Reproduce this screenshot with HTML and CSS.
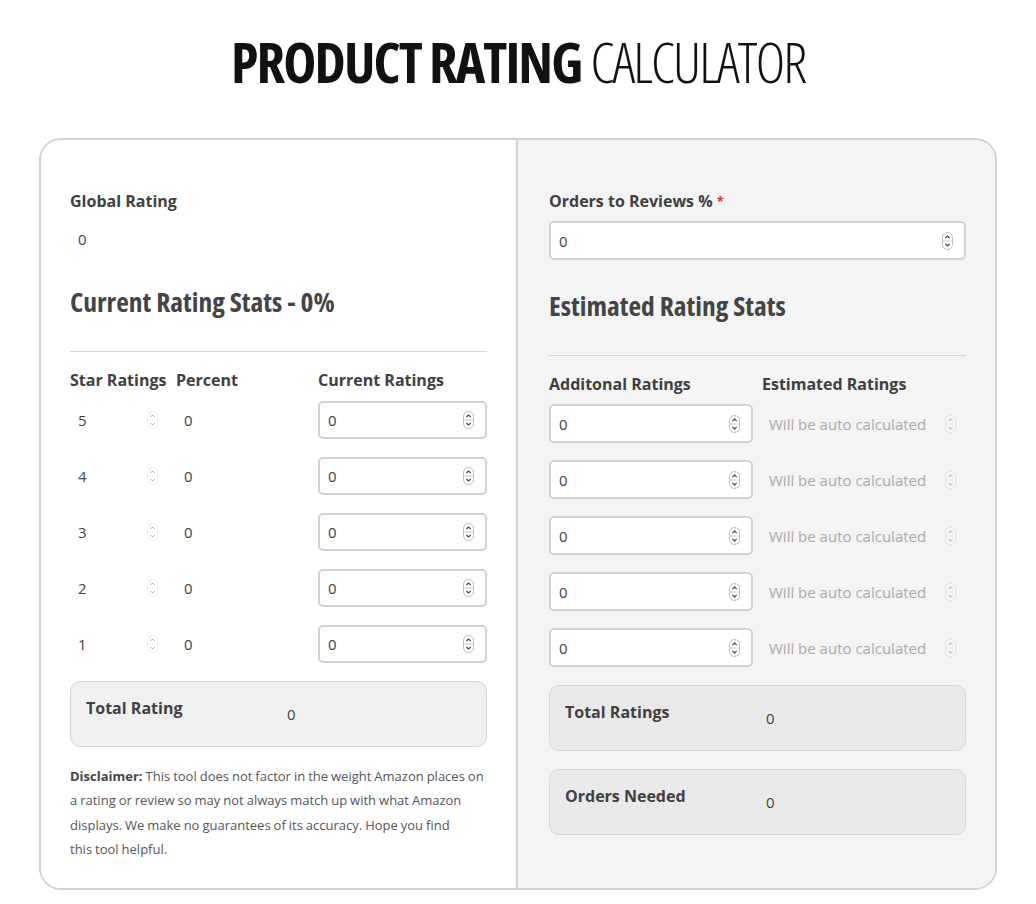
FILE: index.html
```html
<!DOCTYPE html>
<html lang="en">
<head>
<meta charset="utf-8">
<title>Product Rating Calculator</title>
<link rel="stylesheet" href="styles.css">
</head>
<body>
<h1 class="title"><span class="title-bold">PRODUCT RATING</span><span class="title-light">CALCULATOR</span></h1>

<div class="card">
  <section class="col col-left">
    <div class="label">Global Rating</div>
    <div class="global-value">0</div>
    <h2 class="stats-title">Current Rating Stats - 0%</h2>
    <hr class="rule">
    <div class="table-left">
      <div class="th">Star Ratings</div>
      <div class="th">Percent</div>
      <div class="th">Current Ratings</div>
    </div>
    <div class="rows-left">
      <div class="table-left row">
        <div class="plain star"><span class="pv">5</span><span class="spin faint"><svg viewBox="0 0 11 18" width="11" height="18"><rect x="0.5" y="0.5" width="10" height="17" rx="5" fill="#fff" stroke="#bbb"/><line x1="1" y1="9" x2="10" y2="9" stroke="#ccc"/><path d="M3.3 6.2 L5.5 4 L7.7 6.2" fill="none" stroke="#555" stroke-width="1.1"/><path d="M3.3 11.8 L5.5 14 L7.7 11.8" fill="none" stroke="#555" stroke-width="1.1"/></svg></span></div>
        <div class="plain pct"><span class="pv">0</span></div>
        <div class="field"><input class="field-input" type="text" value="0"><span class="spin"><svg viewBox="0 0 11 18" width="11" height="18"><rect x="0.5" y="0.5" width="10" height="17" rx="5" fill="#fff" stroke="#bbb"/><line x1="1" y1="9" x2="10" y2="9" stroke="#ccc"/><path d="M3.3 6.2 L5.5 4 L7.7 6.2" fill="none" stroke="#444" stroke-width="1.2"/><path d="M3.3 11.8 L5.5 14 L7.7 11.8" fill="none" stroke="#444" stroke-width="1.2"/></svg></span></div>
      </div>
      <div class="table-left row">
        <div class="plain star"><span class="pv">4</span><span class="spin faint"><svg viewBox="0 0 11 18" width="11" height="18"><rect x="0.5" y="0.5" width="10" height="17" rx="5" fill="#fff" stroke="#bbb"/><line x1="1" y1="9" x2="10" y2="9" stroke="#ccc"/><path d="M3.3 6.2 L5.5 4 L7.7 6.2" fill="none" stroke="#555" stroke-width="1.1"/><path d="M3.3 11.8 L5.5 14 L7.7 11.8" fill="none" stroke="#555" stroke-width="1.1"/></svg></span></div>
        <div class="plain pct"><span class="pv">0</span></div>
        <div class="field"><input class="field-input" type="text" value="0"><span class="spin"><svg viewBox="0 0 11 18" width="11" height="18"><rect x="0.5" y="0.5" width="10" height="17" rx="5" fill="#fff" stroke="#bbb"/><line x1="1" y1="9" x2="10" y2="9" stroke="#ccc"/><path d="M3.3 6.2 L5.5 4 L7.7 6.2" fill="none" stroke="#444" stroke-width="1.2"/><path d="M3.3 11.8 L5.5 14 L7.7 11.8" fill="none" stroke="#444" stroke-width="1.2"/></svg></span></div>
      </div>
      <div class="table-left row">
        <div class="plain star"><span class="pv">3</span><span class="spin faint"><svg viewBox="0 0 11 18" width="11" height="18"><rect x="0.5" y="0.5" width="10" height="17" rx="5" fill="#fff" stroke="#bbb"/><line x1="1" y1="9" x2="10" y2="9" stroke="#ccc"/><path d="M3.3 6.2 L5.5 4 L7.7 6.2" fill="none" stroke="#555" stroke-width="1.1"/><path d="M3.3 11.8 L5.5 14 L7.7 11.8" fill="none" stroke="#555" stroke-width="1.1"/></svg></span></div>
        <div class="plain pct"><span class="pv">0</span></div>
        <div class="field"><input class="field-input" type="text" value="0"><span class="spin"><svg viewBox="0 0 11 18" width="11" height="18"><rect x="0.5" y="0.5" width="10" height="17" rx="5" fill="#fff" stroke="#bbb"/><line x1="1" y1="9" x2="10" y2="9" stroke="#ccc"/><path d="M3.3 6.2 L5.5 4 L7.7 6.2" fill="none" stroke="#444" stroke-width="1.2"/><path d="M3.3 11.8 L5.5 14 L7.7 11.8" fill="none" stroke="#444" stroke-width="1.2"/></svg></span></div>
      </div>
      <div class="table-left row">
        <div class="plain star"><span class="pv">2</span><span class="spin faint"><svg viewBox="0 0 11 18" width="11" height="18"><rect x="0.5" y="0.5" width="10" height="17" rx="5" fill="#fff" stroke="#bbb"/><line x1="1" y1="9" x2="10" y2="9" stroke="#ccc"/><path d="M3.3 6.2 L5.5 4 L7.7 6.2" fill="none" stroke="#555" stroke-width="1.1"/><path d="M3.3 11.8 L5.5 14 L7.7 11.8" fill="none" stroke="#555" stroke-width="1.1"/></svg></span></div>
        <div class="plain pct"><span class="pv">0</span></div>
        <div class="field"><input class="field-input" type="text" value="0"><span class="spin"><svg viewBox="0 0 11 18" width="11" height="18"><rect x="0.5" y="0.5" width="10" height="17" rx="5" fill="#fff" stroke="#bbb"/><line x1="1" y1="9" x2="10" y2="9" stroke="#ccc"/><path d="M3.3 6.2 L5.5 4 L7.7 6.2" fill="none" stroke="#444" stroke-width="1.2"/><path d="M3.3 11.8 L5.5 14 L7.7 11.8" fill="none" stroke="#444" stroke-width="1.2"/></svg></span></div>
      </div>
      <div class="table-left row">
        <div class="plain star"><span class="pv">1</span><span class="spin faint"><svg viewBox="0 0 11 18" width="11" height="18"><rect x="0.5" y="0.5" width="10" height="17" rx="5" fill="#fff" stroke="#bbb"/><line x1="1" y1="9" x2="10" y2="9" stroke="#ccc"/><path d="M3.3 6.2 L5.5 4 L7.7 6.2" fill="none" stroke="#555" stroke-width="1.1"/><path d="M3.3 11.8 L5.5 14 L7.7 11.8" fill="none" stroke="#555" stroke-width="1.1"/></svg></span></div>
        <div class="plain pct"><span class="pv">0</span></div>
        <div class="field"><input class="field-input" type="text" value="0"><span class="spin"><svg viewBox="0 0 11 18" width="11" height="18"><rect x="0.5" y="0.5" width="10" height="17" rx="5" fill="#fff" stroke="#bbb"/><line x1="1" y1="9" x2="10" y2="9" stroke="#ccc"/><path d="M3.3 6.2 L5.5 4 L7.7 6.2" fill="none" stroke="#444" stroke-width="1.2"/><path d="M3.3 11.8 L5.5 14 L7.7 11.8" fill="none" stroke="#444" stroke-width="1.2"/></svg></span></div>
      </div>
    </div>
    <div class="total-box total-left">
      <div class="total-label">Total Rating</div>
      <div class="total-value">0</div>
    </div>
    <p class="disclaimer"><strong>Disclaimer:</strong> This tool does not factor in the weight Amazon places on a rating or review so may not always match up with what Amazon displays. We make no guarantees of its accuracy. Hope you find this&nbsp;tool helpful.</p>
  </section>

  <section class="col col-right">
    <div class="label">Orders to Reviews %<span class="req">*</span></div>
    <div class="field field-wide"><input class="field-input" type="text" value="0"><span class="spin"><svg viewBox="0 0 11 18" width="11" height="18"><rect x="0.5" y="0.5" width="10" height="17" rx="5" fill="#fff" stroke="#bbb"/><line x1="1" y1="9" x2="10" y2="9" stroke="#ccc"/><path d="M3.3 6.2 L5.5 4 L7.7 6.2" fill="none" stroke="#444" stroke-width="1.2"/><path d="M3.3 11.8 L5.5 14 L7.7 11.8" fill="none" stroke="#444" stroke-width="1.2"/></svg></span></div>
    <h2 class="stats-title stats-right">Estimated Rating Stats</h2>
    <hr class="rule">
    <div class="table-right">
      <div class="th">Additonal Ratings</div>
      <div class="th">Estimated Ratings</div>
    </div>
    <div class="rows-right">
      <div class="table-right row">
        <div class="field field-r"><input class="field-input" type="text" value="0"><span class="spin"><svg viewBox="0 0 11 18" width="11" height="18"><rect x="0.5" y="0.5" width="10" height="17" rx="5" fill="#fff" stroke="#bbb"/><line x1="1" y1="9" x2="10" y2="9" stroke="#ccc"/><path d="M3.3 6.2 L5.5 4 L7.7 6.2" fill="none" stroke="#444" stroke-width="1.2"/><path d="M3.3 11.8 L5.5 14 L7.7 11.8" fill="none" stroke="#444" stroke-width="1.2"/></svg></span></div>
        <div class="plain est"><span class="ph">Will be auto calculated</span><span class="spin faint"><svg viewBox="0 0 11 18" width="11" height="18"><rect x="0.5" y="0.5" width="10" height="17" rx="5" fill="#fff" stroke="#bbb"/><line x1="1" y1="9" x2="10" y2="9" stroke="#ccc"/><path d="M3.3 6.2 L5.5 4 L7.7 6.2" fill="none" stroke="#555" stroke-width="1.1"/><path d="M3.3 11.8 L5.5 14 L7.7 11.8" fill="none" stroke="#555" stroke-width="1.1"/></svg></span></div>
      </div>
      <div class="table-right row">
        <div class="field field-r"><input class="field-input" type="text" value="0"><span class="spin"><svg viewBox="0 0 11 18" width="11" height="18"><rect x="0.5" y="0.5" width="10" height="17" rx="5" fill="#fff" stroke="#bbb"/><line x1="1" y1="9" x2="10" y2="9" stroke="#ccc"/><path d="M3.3 6.2 L5.5 4 L7.7 6.2" fill="none" stroke="#444" stroke-width="1.2"/><path d="M3.3 11.8 L5.5 14 L7.7 11.8" fill="none" stroke="#444" stroke-width="1.2"/></svg></span></div>
        <div class="plain est"><span class="ph">Will be auto calculated</span><span class="spin faint"><svg viewBox="0 0 11 18" width="11" height="18"><rect x="0.5" y="0.5" width="10" height="17" rx="5" fill="#fff" stroke="#bbb"/><line x1="1" y1="9" x2="10" y2="9" stroke="#ccc"/><path d="M3.3 6.2 L5.5 4 L7.7 6.2" fill="none" stroke="#555" stroke-width="1.1"/><path d="M3.3 11.8 L5.5 14 L7.7 11.8" fill="none" stroke="#555" stroke-width="1.1"/></svg></span></div>
      </div>
      <div class="table-right row">
        <div class="field field-r"><input class="field-input" type="text" value="0"><span class="spin"><svg viewBox="0 0 11 18" width="11" height="18"><rect x="0.5" y="0.5" width="10" height="17" rx="5" fill="#fff" stroke="#bbb"/><line x1="1" y1="9" x2="10" y2="9" stroke="#ccc"/><path d="M3.3 6.2 L5.5 4 L7.7 6.2" fill="none" stroke="#444" stroke-width="1.2"/><path d="M3.3 11.8 L5.5 14 L7.7 11.8" fill="none" stroke="#444" stroke-width="1.2"/></svg></span></div>
        <div class="plain est"><span class="ph">Will be auto calculated</span><span class="spin faint"><svg viewBox="0 0 11 18" width="11" height="18"><rect x="0.5" y="0.5" width="10" height="17" rx="5" fill="#fff" stroke="#bbb"/><line x1="1" y1="9" x2="10" y2="9" stroke="#ccc"/><path d="M3.3 6.2 L5.5 4 L7.7 6.2" fill="none" stroke="#555" stroke-width="1.1"/><path d="M3.3 11.8 L5.5 14 L7.7 11.8" fill="none" stroke="#555" stroke-width="1.1"/></svg></span></div>
      </div>
      <div class="table-right row">
        <div class="field field-r"><input class="field-input" type="text" value="0"><span class="spin"><svg viewBox="0 0 11 18" width="11" height="18"><rect x="0.5" y="0.5" width="10" height="17" rx="5" fill="#fff" stroke="#bbb"/><line x1="1" y1="9" x2="10" y2="9" stroke="#ccc"/><path d="M3.3 6.2 L5.5 4 L7.7 6.2" fill="none" stroke="#444" stroke-width="1.2"/><path d="M3.3 11.8 L5.5 14 L7.7 11.8" fill="none" stroke="#444" stroke-width="1.2"/></svg></span></div>
        <div class="plain est"><span class="ph">Will be auto calculated</span><span class="spin faint"><svg viewBox="0 0 11 18" width="11" height="18"><rect x="0.5" y="0.5" width="10" height="17" rx="5" fill="#fff" stroke="#bbb"/><line x1="1" y1="9" x2="10" y2="9" stroke="#ccc"/><path d="M3.3 6.2 L5.5 4 L7.7 6.2" fill="none" stroke="#555" stroke-width="1.1"/><path d="M3.3 11.8 L5.5 14 L7.7 11.8" fill="none" stroke="#555" stroke-width="1.1"/></svg></span></div>
      </div>
      <div class="table-right row">
        <div class="field field-r"><input class="field-input" type="text" value="0"><span class="spin"><svg viewBox="0 0 11 18" width="11" height="18"><rect x="0.5" y="0.5" width="10" height="17" rx="5" fill="#fff" stroke="#bbb"/><line x1="1" y1="9" x2="10" y2="9" stroke="#ccc"/><path d="M3.3 6.2 L5.5 4 L7.7 6.2" fill="none" stroke="#444" stroke-width="1.2"/><path d="M3.3 11.8 L5.5 14 L7.7 11.8" fill="none" stroke="#444" stroke-width="1.2"/></svg></span></div>
        <div class="plain est"><span class="ph">Will be auto calculated</span><span class="spin faint"><svg viewBox="0 0 11 18" width="11" height="18"><rect x="0.5" y="0.5" width="10" height="17" rx="5" fill="#fff" stroke="#bbb"/><line x1="1" y1="9" x2="10" y2="9" stroke="#ccc"/><path d="M3.3 6.2 L5.5 4 L7.7 6.2" fill="none" stroke="#555" stroke-width="1.1"/><path d="M3.3 11.8 L5.5 14 L7.7 11.8" fill="none" stroke="#555" stroke-width="1.1"/></svg></span></div>
      </div>
    </div>
    <div class="total-box total-right">
      <div class="total-label">Total Ratings</div>
      <div class="total-value">0</div>
    </div>
    <div class="total-box total-right orders">
      <div class="total-label">Orders Needed</div>
      <div class="total-value">0</div>
    </div>
  </section>
</div>
</body>
</html>
```

FILE: styles.css
```css
* { box-sizing: border-box; }

body {
  margin: 0;
  background: #fff;
  font-family: "Open Sans", "Liberation Sans", sans-serif;
  color: #444;
}

.title {
  margin: 0;
  padding-top: 28px;
  height: 138px;
  text-align: center;
  font-size: 56px;
  line-height: 67px;
  color: #111;
  font-stretch: 75%;
  letter-spacing: -1.9px;
  white-space: nowrap;
}

.title-bold {
  font-weight: 700;
  margin-right: 9px;
}

.title-light {
  font-weight: 300;
}

.card {
  margin: 0 39px;
  width: 958px;
  height: 752px;
  border: 2px solid #d2d2d2;
  border-radius: 22px;
  display: grid;
  grid-template-columns: 477px minmax(0, 1fr);
  overflow: hidden;
}

.col {
  padding-top: 51px;
  display: flex;
  flex-direction: column;
  min-width: 0;
}

.col-left {
  background: #fff;
  border-right: 2px solid #d2d2d2;
  padding-left: 29px;
  padding-right: 29px;
}

.col-right {
  background: #f4f4f4;
  padding-left: 31px;
  padding-right: 29px;
}

.label {
  font-size: 16px;
  line-height: 20px;
  font-weight: 700;
  color: #404040;
}

.req {
  color: #d63638;
  font-size: 13px;
  margin-left: 4px;
  vertical-align: top;
}

.global-value {
  margin-top: 18px;
  padding-left: 8px;
  font-size: 15px;
  line-height: 20px;
  color: #444;
}

.stats-title {
  margin: 36px 0 0 0;
  font-size: 27.5px;
  line-height: 34px;
  font-weight: 700;
  font-stretch: 75%;
  color: #444;
}

.stats-right {
  margin-top: 29px;
}

.rule {
  margin: 32px 0 0 0;
  border: 0;
  border-top: 1px solid #d6d6d6;
  height: 0;
}

.th {
  font-size: 16px;
  line-height: 20px;
  font-weight: 700;
  color: #404040;
  white-space: nowrap;
}

.table-left {
  display: grid;
  grid-template-columns: 106px 142px minmax(0, 1fr);
  margin-top: 18px;
}

.rows-left {
  margin-top: 11px;
  display: flex;
  flex-direction: column;
  gap: 18px;
}

.rows-left .row,
.rows-right .row {
  margin-top: 0;
  align-items: center;
}

.table-right {
  display: grid;
  grid-template-columns: 204px minmax(0, 1fr);
  column-gap: 9px;
  margin-top: 18px;
}

.rows-right {
  margin-top: 10px;
  display: flex;
  flex-direction: column;
  gap: 17px;
}

.plain {
  display: flex;
  align-items: center;
  height: 38px;
  font-size: 15px;
  color: #444;
}

.star {
  width: 88px;
  padding-left: 8px;
  justify-content: space-between;
}

.pct {
  padding-left: 8px;
}

.field {
  display: flex;
  align-items: center;
  min-width: 0;
  height: 38px;
  background: #fff;
  border: 2px solid #d2d2d2;
  border-radius: 5px;
  padding: 0 11px 0 8px;
}

.field-wide {
  margin-top: 10px;
  height: 39px;
}

.field-r {
  height: 39px;
}

.field-input {
  flex: 1;
  width: 0;
  min-width: 0;
  border: 0;
  outline: 0;
  background: transparent;
  padding: 0;
  font-family: "Open Sans", "Liberation Sans", sans-serif;
  font-size: 15px;
  color: #444;
}

.spin {
  display: flex;
  flex: none;
  width: 11px;
  height: 18px;
}

.spin svg {
  display: block;
}

.faint {
  opacity: 0.3;
}

.est {
  height: 39px;
  padding: 0 10px 0 7px;
  justify-content: space-between;
}

.ph {
  color: #aaa;
  font-size: 15px;
  white-space: nowrap;
}

.total-box {
  margin-top: 18px;
  height: 66px;
  border: 1px solid #d6d6d6;
  border-radius: 10px;
  display: flex;
  align-items: flex-start;
  padding: 16px 15px 0 15px;
}

.total-left {
  background: #f0f0f0;
}

.total-right {
  background: #e9e9e9;
}

.total-label {
  width: 201px;
  font-size: 16px;
  line-height: 20px;
  font-weight: 700;
  color: #404040;
}

.total-value {
  margin-top: 6px;
  font-size: 15px;
  line-height: 20px;
  color: #444;
}

.disclaimer {
  margin: 17px 0 0 0;
  font-size: 13px;
  line-height: 24.3px;
  color: #555;
  word-spacing: -0.4px;
}

.disclaimer strong {
  color: #444;
}
```
